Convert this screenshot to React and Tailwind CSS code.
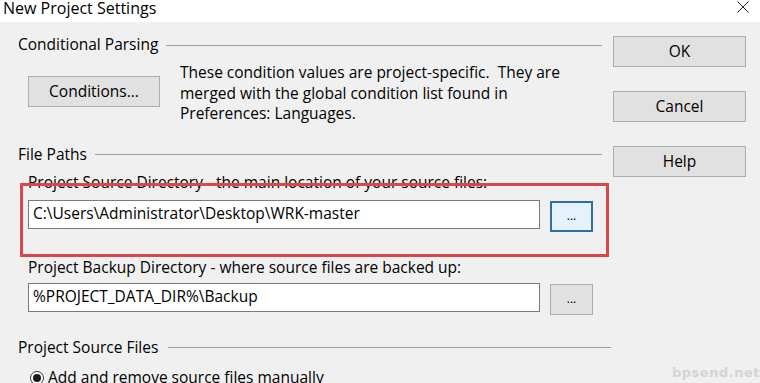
export default function App() {
  const font = { fontFamily: '"Open Sans", "Noto Sans", sans-serif' };
  return (
    <div className="w-[760px] h-[383px] overflow-hidden bg-[#f0f0f0] text-[15.5px] text-black" style={font}>
      {/* title bar */}
      <div className="h-[22px] bg-white flex items-start justify-between pl-[3px] pr-[10px]">
        <span className="text-[16px] leading-[17px]">New Project Settings</span>
        <svg width="14" height="12" viewBox="0 0 14 12" className="mt-[1px]">
          <path d="M1.5 0.5 L12.5 11.5 M12.5 0.5 L1.5 11.5" stroke="#222" strokeWidth="1" />
        </svg>
      </div>

      <div className="relative flex pl-[18px]">
        {/* left column */}
        <div className="w-[593px] flex flex-col">
          <div className="mt-[13px] h-[20px] flex items-center">
            <span className="shrink-0 pr-[8px]">Conditional Parsing</span>
            <div className="h-px flex-1 bg-[#a0a0a0] mr-[9px]" />
          </div>
          <div className="flex pl-[10px] mt-[7px]">
            <button className="mt-[14px] w-[132px] h-[31px] bg-[#e1e1e1] border border-[#adadad] shrink-0">
              Conditions...
            </button>
            <p className="ml-[20px] leading-[20.5px]">
              These condition values are project-specific.&nbsp; They are<br />
              merged with the global condition list found in<br />
              Preferences: Languages.
            </p>
          </div>

          <div className="mt-[21px] h-[20px] flex items-center">
            <span className="shrink-0 pr-[8px]">File Paths</span>
            <div className="h-px flex-1 bg-[#a0a0a0] mr-[9px]" />
          </div>

          <div className="pl-[10px] flex flex-col">
            <div className="mt-[7px] h-[20px] leading-[20px]">
              Project Source Directory - the main location of your source files:
            </div>
            <div className="mt-[8px] flex items-start">
              <div className="w-[512px] h-[29px] bg-white border border-[#7a7a7a] flex items-center pl-[4px]">
                C:\Users\Administrator\Desktop\WRK-master
              </div>
              <button className="ml-[10px] mt-[1px] w-[43px] h-[31px] bg-[#e5f1fb] border-2 border-[#2f6da3] flex items-center justify-center text-[12px]">
                ...
              </button>
            </div>

            <div className="mt-[25px] h-[20px] leading-[20px]">
              Project Backup Directory - where source files are backed up:
            </div>
            <div className="mt-[6px] flex items-start">
              <div className="w-[512px] h-[29px] bg-white border border-[#7a7a7a] flex items-center pl-[4px]">
                %PROJECT_DATA_DIR%\Backup
              </div>
              <button className="ml-[10px] mt-[1px] w-[43px] h-[31px] bg-[#e1e1e1] border border-[#adadad] flex items-center justify-center text-[12px]">
                ...
              </button>
            </div>
          </div>

          <div className="mt-[23px] h-[20px] flex items-center w-[593px]">
            <span className="shrink-0 pr-[10px]">Project Source Files</span>
            <div className="h-px flex-1 bg-[#a0a0a0]" />
          </div>
          <div className="mt-[10px] pl-[12px] flex items-center h-[20px]">
            <span className="w-[14px] h-[14px] rounded-full border border-[#333] bg-white flex items-center justify-center shrink-0">
              <span className="w-[8px] h-[8px] rounded-full bg-[#1a1a1a]" />
            </span>
            <span className="ml-[4px]">Add and remove source files manually</span>
          </div>
        </div>

        {/* right column */}
        <div className="ml-[2px] mt-[14px] flex flex-col w-[133px]">
          <button className="h-[31px] bg-[#e1e1e1] border border-[#adadad]">OK</button>
          <button className="mt-[24px] h-[31px] bg-[#e1e1e1] border border-[#adadad]">Cancel</button>
          <button className="mt-[24px] h-[31px] bg-[#e1e1e1] border border-[#adadad]">Help</button>
        </div>

        {/* annotation overlay */}
        <div className="absolute left-[20px] top-[161px] w-[589px] h-[74px] border-[3px] border-[#d9474b] pointer-events-none" />
        <div className="absolute left-[672px] top-[341px] text-[13px] font-bold text-[#d4d4d4] tracking-[0.5px]" style={{ fontFamily: '"DejaVu Sans", sans-serif' }}>
          bpsend.net
        </div>
      </div>
    </div>
  );
}
